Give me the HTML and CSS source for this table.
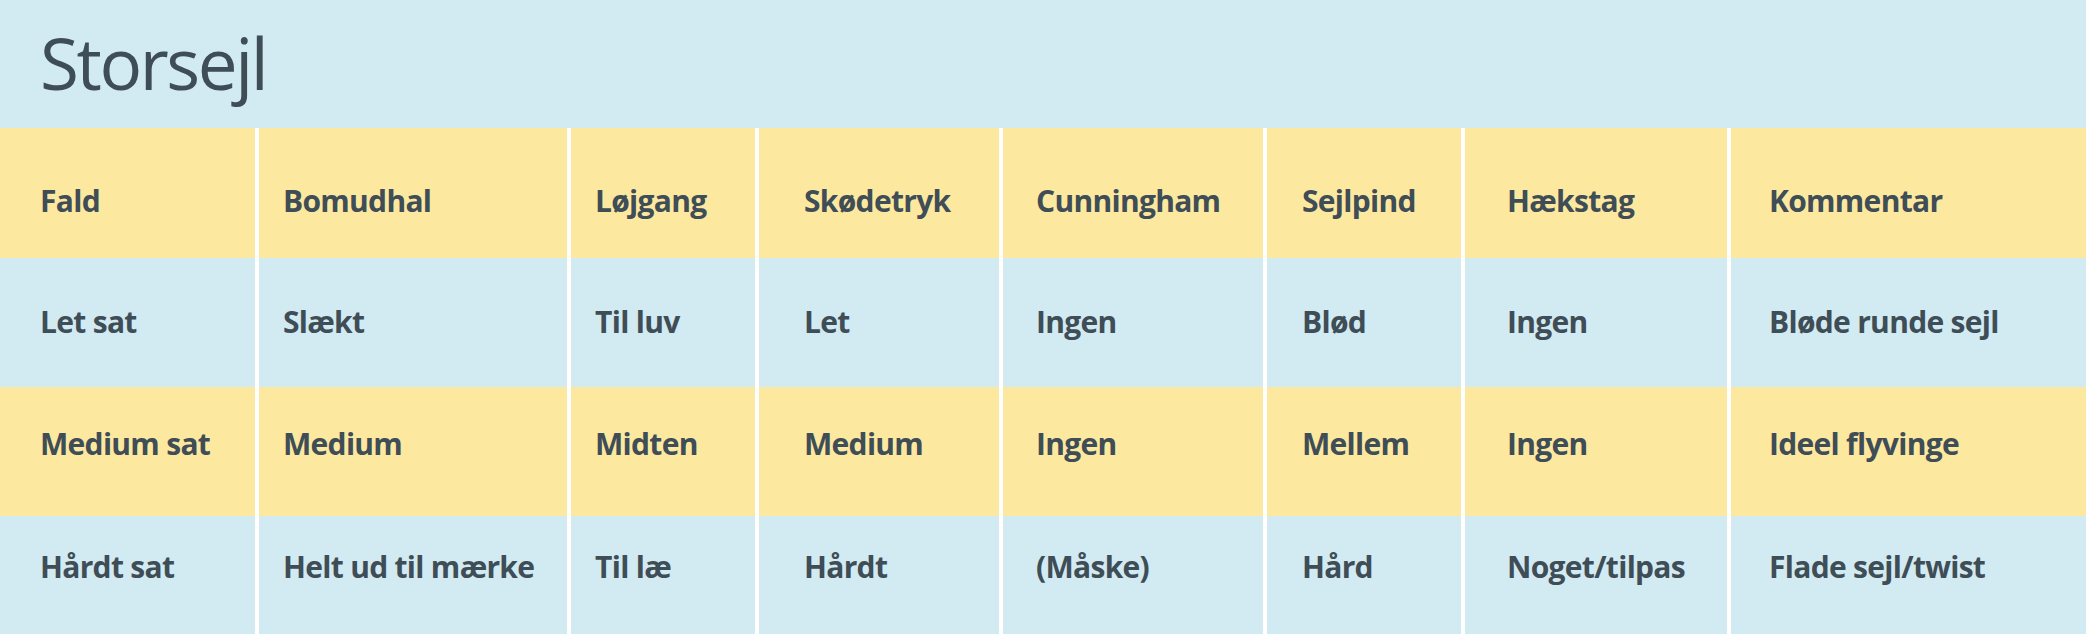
FILE: index.html
```html
<!DOCTYPE html>
<html lang="da">
<head>
<meta charset="utf-8">
<title>Storsejl</title>
<link rel="stylesheet" href="styles.css">
</head>
<body>
<div class="page">
  <header class="band">
    <h1 class="title">Storsejl</h1>
  </header>
  <div class="table">
    <div class="row yellow head r0">
      <div class="cell">Fald</div>
      <div class="cell">Bomudhal</div>
      <div class="cell">Løjgang</div>
      <div class="cell">Skødetryk</div>
      <div class="cell">Cunningham</div>
      <div class="cell">Sejlpind</div>
      <div class="cell">Hækstag</div>
      <div class="cell">Kommentar</div>
    </div>
    <div class="row blue r1">
      <div class="cell">Let sat</div>
      <div class="cell">Slækt</div>
      <div class="cell">Til luv</div>
      <div class="cell">Let</div>
      <div class="cell">Ingen</div>
      <div class="cell">Blød</div>
      <div class="cell">Ingen</div>
      <div class="cell">Bløde runde sejl</div>
    </div>
    <div class="row yellow r2">
      <div class="cell">Medium sat</div>
      <div class="cell">Medium</div>
      <div class="cell">Midten</div>
      <div class="cell">Medium</div>
      <div class="cell">Ingen</div>
      <div class="cell">Mellem</div>
      <div class="cell">Ingen</div>
      <div class="cell">Ideel flyvinge</div>
    </div>
    <div class="row blue r3">
      <div class="cell">Hårdt sat</div>
      <div class="cell">Helt ud til mærke</div>
      <div class="cell">Til læ</div>
      <div class="cell">Hårdt</div>
      <div class="cell">(Måske)</div>
      <div class="cell">Hård</div>
      <div class="cell">Noget/tilpas</div>
      <div class="cell">Flade sejl/twist</div>
    </div>
  </div>
</div>
</body>
</html>
```
FILE: styles.css
```css
html, body {
  margin: 0;
  padding: 0;
  background: #d2eaf2;
}

body {
  font-family: "Open Sans", "Noto Sans", sans-serif;
  color: #3e4d56;
}

.page {
  width: 2086px;
}

.band {
  height: 128px;
  background: #d2eaf2;
  padding: 27px 0 0 40px;
  box-sizing: border-box;
}

.title {
  margin: 0;
  font-size: 71px;
  line-height: 71px;
  font-weight: 400;
  letter-spacing: -2.4px;
  color: #3e4d56;
}

.table {
  display: grid;
  grid-template-columns: 255px 308px 184px 240px 260px 194px 262px 1fr;
  column-gap: 4px;
  background: #ffffff;
}

.row {
  display: contents;
}

.cell {
  font-size: 30px;
  line-height: 40px;
  font-weight: 700;
  letter-spacing: -0.7px;
  white-space: nowrap;
  box-sizing: border-box;
}

.yellow .cell { background: #fde89f; }
.blue .cell { background: #d2eaf2; }

.r0 .cell { height: 130px; padding-top: 53px; }
.r1 .cell { height: 129px; padding-top: 44px; }
.r2 .cell { height: 129px; padding-top: 37px; }
.r3 .cell { height: 129px; padding-top: 31px; }

.cell:nth-child(1) { padding-left: 40px; }
.cell:nth-child(2) { padding-left: 24px; }
.cell:nth-child(3) { padding-left: 24px; }
.cell:nth-child(4) { padding-left: 45px; }
.cell:nth-child(5) { padding-left: 33px; }
.cell:nth-child(6) { padding-left: 35px; }
.cell:nth-child(7) { padding-left: 42px; }
.cell:nth-child(8) { padding-left: 38px; }
```
